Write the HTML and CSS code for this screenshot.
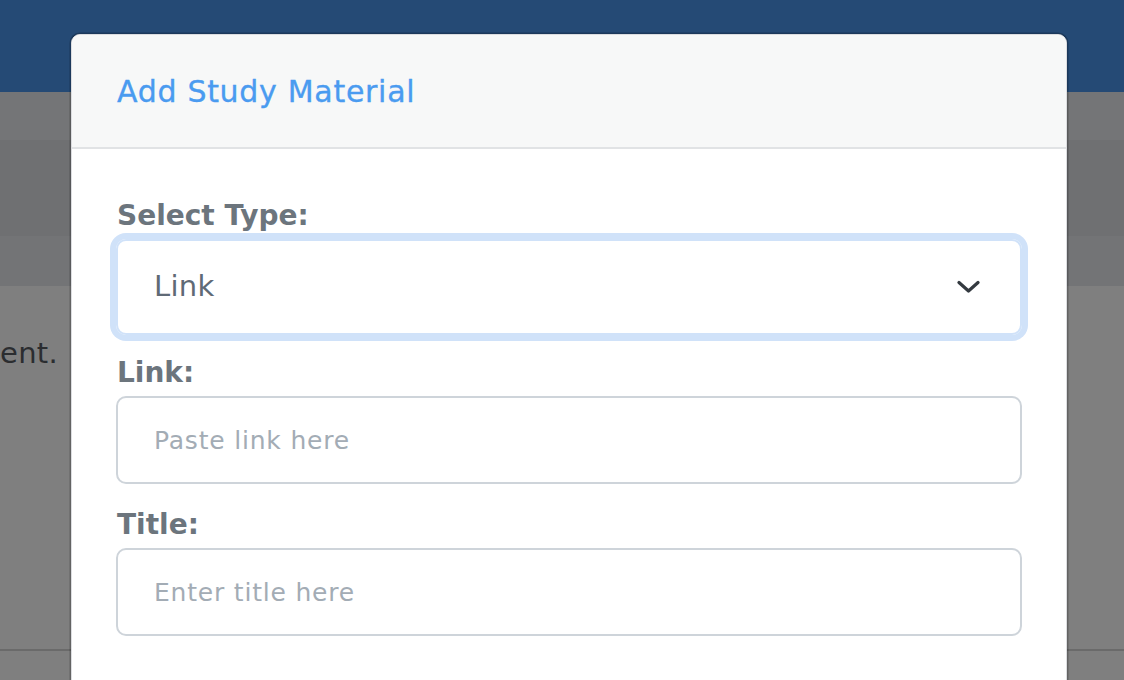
FILE: index.html
```html
<!DOCTYPE html>
<html lang="en">
<head>
<meta charset="utf-8">
<title>Add Study Material</title>
<link rel="stylesheet" href="styles.css">
</head>
<body>
<div class="page">
  <div class="topbar"></div>
  <div class="band band-1"></div>
  <div class="band band-2"></div>
  <div class="band band-3"></div>
  <div class="content">
    <p class="content-text">ent.</p>
    <div class="content-rule"></div>
  </div>
</div>

<div class="modal">
  <div class="modal-header">
    <h2 class="modal-title">Add Study Material</h2>
  </div>
  <div class="modal-body">
    <div class="form-group form-group-select">
      <label class="form-label">Select Type:</label>
      <div class="select-box">
        <span class="select-value">Link</span>
        <svg class="chevron" width="23" height="14" viewBox="0 0 23 14">
          <polyline points="2,2.5 11.5,11 21,2.5" fill="none" stroke="#343a40" stroke-width="3.2" stroke-linecap="round" stroke-linejoin="round"/>
        </svg>
      </div>
    </div>
    <div class="form-group">
      <label class="form-label">Link:</label>
      <input class="form-input" type="text" placeholder="Paste link here">
    </div>
    <div class="form-group">
      <label class="form-label">Title:</label>
      <input class="form-input" type="text" placeholder="Enter title here">
    </div>
  </div>
</div>
</body>
</html>
```
FILE: styles.css
```css
* { box-sizing: border-box; }

html, body {
  margin: 0;
  padding: 0;
  width: 1124px;
  height: 680px;
  overflow: hidden;
  font-family: "DejaVu Sans", "Liberation Sans", sans-serif;
  background: #7f7f7f;
}

.page {
  display: flex;
  flex-direction: column;
  height: 680px;
}

.topbar { height: 92px; background: #254a75; }
.band-1 { height: 48px; background: #747577; }
.band-2 { height: 96px; background: #6f7072; }
.band-3 { height: 50px; background: #737476; }

.content {
  flex: 1;
  background: #7f7f7f;
  padding-top: 50px;
}

.content-text {
  margin: 0;
  font-size: 29px;
  line-height: 34px;
  color: #2b2d30;
  letter-spacing: 0.3px;
}

.content-rule {
  margin-top: 279px;
  height: 2px;
  background: #6a6a6a;
}

.modal {
  position: absolute;
  left: 71px;
  top: 34px;
  width: 996px;
  height: 700px;
  background: #fff;
  border: 1px solid #dcdde0;
  border-radius: 9px;
  box-shadow: 0 0 0 1.5px rgba(0, 0, 0, 0.22);
  overflow: hidden;
}

.modal-header {
  height: 114px;
  background: #f7f8f8;
  border-bottom: 2px solid #e1e3e5;
  display: flex;
  align-items: center;
  padding: 0 45px;
}

.modal-title {
  margin: 0;
  font-weight: normal;
  font-size: 30px;
  letter-spacing: 0.7px;
  color: #4a9bf0;
  -webkit-text-stroke: 0.35px #4a9bf0;
  line-height: 1;
  padding-top: 2px;
}

.modal-body {
  padding: 50px 44px 0;
}

.form-group {
  display: flex;
  flex-direction: column;
  margin-bottom: 24px;
}

.form-group-select {
  margin-bottom: 21px;
}

.form-label {
  font-weight: bold;
  font-size: 28px;
  line-height: 34px;
  color: #6c757d;
  margin-bottom: 6px;
  padding-left: 1px;
}

.select-box {
  height: 96px;
  border: 2px solid #d0e2f9;
  border-radius: 10px;
  box-shadow: 0 0 0 6px #d0e2f9;
  display: flex;
  align-items: center;
  justify-content: space-between;
  padding: 0 40px 0 36px;
}

.select-value {
  font-size: 29px;
  letter-spacing: 0.3px;
  color: #5f6a76;
  margin-top: -3px;
}

.chevron { display: block; }

.form-input {
  height: 88px;
  width: 100%;
  border: 2px solid #ced4da;
  border-radius: 10px;
  padding: 0 36px;
  font-family: "DejaVu Sans", "Liberation Sans", sans-serif;
  font-size: 25px;
  letter-spacing: 0.8px;
  color: #495057;
  background: #fff;
  outline: none;
}

.form-input::placeholder {
  color: #a3acb5;
}
```
